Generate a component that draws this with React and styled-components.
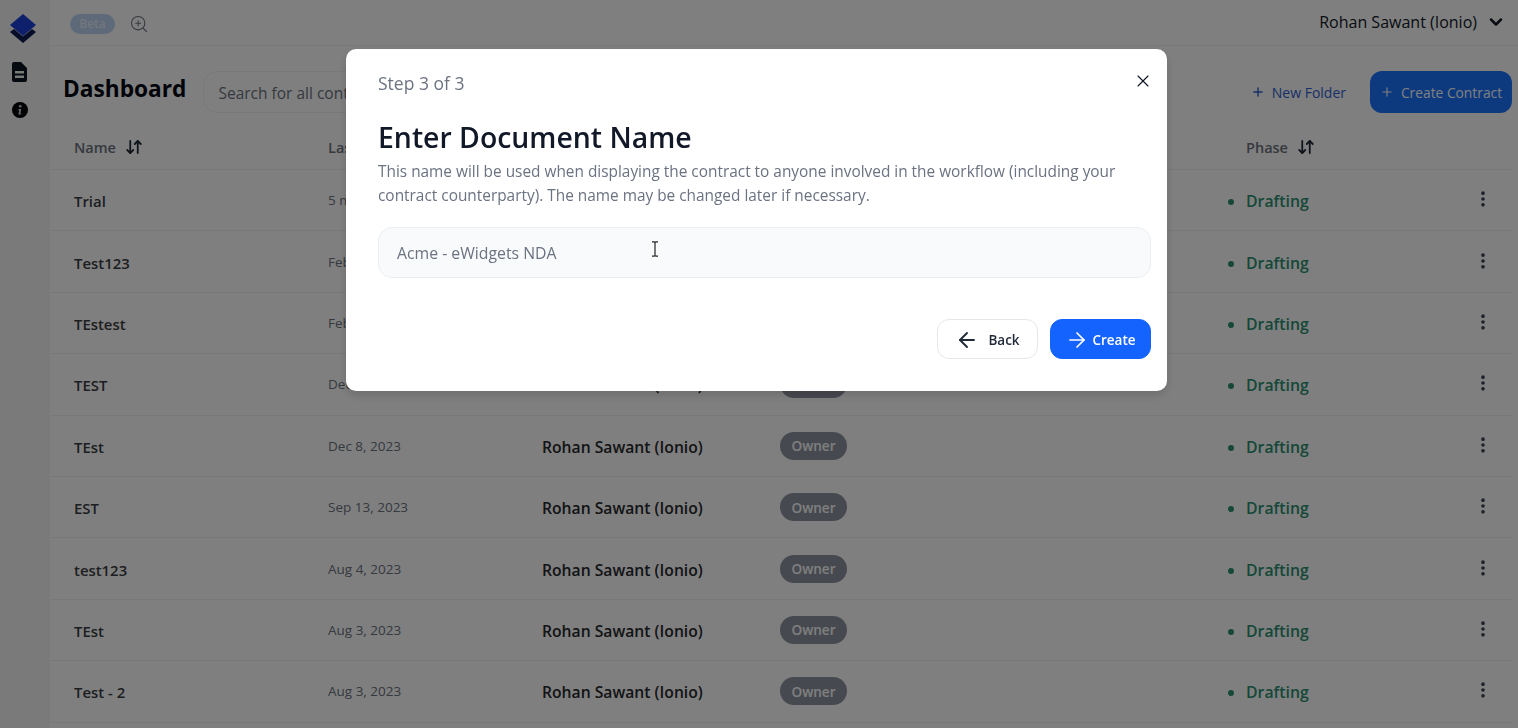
import React from "react";
import styled, { createGlobalStyle } from "styled-components";
import { ArrowDownUp, ArrowLeft, ArrowRight, ChevronDown, EllipsisVertical, Plus, X, ZoomIn } from "lucide-react";

const GlobalStyle = createGlobalStyle`
    * {
        box-sizing: border-box;
    }
    html, body {
        margin: 0;
        height: 100%;
        overflow: hidden;
        background: #ffffff;
        font-family: "Open Sans", "Noto Sans", sans-serif;
        color: #111827;
    }
`;

const Page = styled.div`
    display: flex;
    width: 1518px;
    height: 728px;
    overflow: hidden;
`;

const Sidebar = styled.aside`
    width: 50px;
    flex-shrink: 0;
    background: #f4f4f4;
    display: flex;
    flex-direction: column;
    align-items: center;
    padding: 14px 11px 0 0;
    color: #111827;
`;

const LogoMark = styled.svg`
    margin-left: 7px;
`;

const SideIcon = styled.svg`
    margin-top: ${(p) => p.$top}px;
`;

const Main = styled.main`
    flex: 1;
    min-width: 0;
`;

const TopBar = styled.header`
    height: 46px;
    display: flex;
    align-items: center;
    padding: 2px 12px 0 20px;
    border-bottom: 1px solid #f0f0f0;
`;

const BetaPill = styled.span`
    width: 45px;
    height: 20px;
    border-radius: 10px;
    background: #bcd3f2;
    color: #e6eefa;
    font-size: 12px;
    font-weight: 600;
    display: flex;
    align-items: center;
    justify-content: center;
`;

const ZoomButton = styled.span`
    display: flex;
    margin-left: 14px;
    color: #6b7280;
`;

const UserName = styled.div`
    margin-left: auto;
    margin-bottom: 4px;
    display: flex;
    align-items: center;
    gap: 9px;
    font-size: 16px;
    font-weight: 500;
    color: #111827;
`;

const TitleRow = styled.div`
    display: flex;
    align-items: center;
    height: 64px;
    margin-top: 14px;
    padding: 0 6px 0 13px;
`;

const Title = styled.h1`
    margin: 0 17px 8px 0;
    font-size: 22.7px;
    font-weight: 700;
    color: #030712;
`;

const SearchBox = styled.div`
    width: 420px;
    height: 42px;
    padding: 1px 14px 0;
    border: 1px solid #f0f0f0;
    border-radius: 14px;
    display: flex;
    align-items: center;
    font-size: 15.5px;
    color: #6b7280;
    white-space: nowrap;
`;

const NewFolder = styled.div`
    margin-left: auto;
    margin-right: 24px;
    display: flex;
    align-items: center;
    gap: 7px;
    font-size: 14px;
    font-weight: 500;
    color: #2f5fd0;
`;

const CreateContract = styled.div`
    width: 142px;
    height: 42px;
    border-radius: 12px;
    background: #1a74ff;
    color: #ffffff;
    font-size: 13.8px;
    font-weight: 500;
    display: flex;
    align-items: center;
    justify-content: center;
    gap: 7px;
`;

const Row = styled.div`
    display: grid;
    grid-template-columns: 254px 214px 238px 466px 1fr 26px;
    align-items: center;
    height: ${(p) => (p.$head ? 46 : 61.4)}px;
    margin-right: 6px;
    padding: 0 16px 0 24px;
    border-bottom: 1px solid #f0f0f0;
`;

const HeadCell = styled.div`
    display: flex;
    align-items: center;
    gap: 9px;
    padding-top: 2px;
    font-size: 14.5px;
    font-weight: 560;
    color: #6b7280;
    svg {
        color: #1f2937;
        margin-top: -2px;
    }
`;

const DocName = styled.div`
    padding-top: 2px;
    font-size: 14.9px;
    font-weight: 560;
    color: #3a3d42;
`;

const DateCell = styled.div`
    font-size: 13.5px;
    color: #6b7280;
`;

const OwnerName = styled.div`
    padding-top: 2px;
    font-size: 15.7px;
    font-weight: 560;
    color: #26282c;
`;

const RolePill = styled.span`
    width: 67px;
    height: 28px;
    border-radius: 14px;
    background: #8f93a0;
    color: #ffffff;
    font-size: 13.6px;
    font-weight: 560;
    display: flex;
    align-items: center;
    justify-content: center;
`;

const Phase = styled.div`
    position: relative;
    padding-top: 2px;
    font-size: 15.8px;
    font-weight: 560;
    color: #2a9070;
    &::before {
        content: "";
        position: absolute;
        left: -18px;
        top: 11px;
        width: 6px;
        height: 6px;
        border-radius: 50%;
        background: #2a9070;
    }
`;

const Kebab = styled.div`
    display: flex;
    justify-content: center;
    margin-top: -2px;
    color: #374151;
`;

const Backdrop = styled.div`
    position: fixed;
    inset: 0;
    background: rgba(0, 0, 0, 0.5);
`;

const Modal = styled.section`
    position: fixed;
    left: 346px;
    top: 49px;
    width: 821px;
    height: 342px;
    padding: 22px 16px 0 32px;
    background: #ffffff;
    border-radius: 10px;
    box-shadow: 0 4px 10px rgba(0, 0, 0, 0.15);
`;

const CloseButton = styled.button`
    position: absolute;
    top: 22px;
    right: 14px;
    padding: 0;
    border: 0;
    background: none;
    display: flex;
    color: #111827;
`;

const Step = styled.div`
    font-size: 17.5px;
    line-height: 25px;
    color: #6b7280;
`;

const ModalTitle = styled.h2`
    margin: 21px 0 0;
    font-size: 28.4px;
    line-height: 40px;
    font-weight: 600;
    color: #111827;
`;

const Description = styled.p`
    margin: 3px 0 0;
    font-size: 15.4px;
    line-height: 24px;
    color: #6b7280;
`;

const NameInput = styled.input`
    display: block;
    width: 100%;
    height: 51px;
    margin-top: 19px;
    padding: 1px 18px 0;
    background: #f9fafb;
    border: 1px solid #eceef1;
    border-radius: 14px;
    outline: none;
    font-family: inherit;
    font-size: 15.8px;
    &::placeholder {
        color: #6b7280;
        opacity: 1;
    }
`;

const Actions = styled.div`
    display: flex;
    justify-content: flex-end;
    gap: 12px;
    margin-top: 41px;
`;

const ActionButton = styled.button`
    width: 101px;
    height: 40px;
    padding: 1px 0 0;
    display: flex;
    align-items: center;
    justify-content: center;
    gap: ${(p) => (p.$primary ? 3 : 9)}px;
    border-radius: 12px;
    border: 1px solid ${(p) => (p.$primary ? "#1463ff" : "#e5e7eb")};
    background: ${(p) => (p.$primary ? "#1463ff" : "#ffffff")};
    color: ${(p) => (p.$primary ? "#ffffff" : "#1f2937")};
    font-family: inherit;
    font-size: 13.5px;
    font-weight: 600;
`;

const TextCursor = styled.svg`
    position: fixed;
    left: 651px;
    top: 241px;
`;

const Logo = () => (
    <LogoMark width="28" height="30" viewBox="0 0 28 30">
        <path d="M14 0 L27 11 L14 22 L1 11 Z" fill="#1d3fd6" />
        <path d="M1 18 L5 15 L14 22.5 L23 15 L27 18 L14 29 Z" fill="#0a1a50" />
    </LogoMark>
);

const FileIcon = () => (
    <SideIcon $top={18} width="15" height="20" viewBox="0 0 15 20">
        <path
            fillRule="evenodd"
            d="M2 0h7l6 6v12a2 2 0 0 1-2 2H2a2 2 0 0 1-2-2V2a2 2 0 0 1 2-2zM3 9v2.5h9V9zM3 13.5V16h9v-2.5z"
            fill="#0b1220"
        />
    </SideIcon>
);

const InfoIcon = () => (
    <SideIcon $top={20} width="16" height="16" viewBox="0 0 16 16">
        <circle cx="8" cy="8" r="8" fill="#050608" />
        <circle cx="8.2" cy="4.2" r="1.3" fill="#d0d0d0" />
        <path d="M6.6 7h2.6l-.8 4.4h.9v1.2H6.4l.8-4.4h-.8z" fill="#d0d0d0" />
    </SideIcon>
);

const rows = [
    { name: "Trial", date: "5 months ago" },
    { name: "Test123", date: "Feb 1, 2024" },
    { name: "TEstest", date: "Feb 1, 2024" },
    { name: "TEST", date: "Dec 8, 2023" },
    { name: "TEst", date: "Dec 8, 2023" },
    { name: "EST", date: "Sep 13, 2023" },
    { name: "test123", date: "Aug 4, 2023" },
    { name: "TEst", date: "Aug 3, 2023" },
    { name: "Test - 2", date: "Aug 3, 2023" },
];

function App() {
    return (
        <Page>
            <GlobalStyle />
            <Sidebar>
                <Logo />
                <FileIcon />
                <InfoIcon />
            </Sidebar>
            <Main>
                <TopBar>
                    <BetaPill>Beta</BetaPill>
                    <ZoomButton>
                        <ZoomIn size={20} strokeWidth={1.3} />
                    </ZoomButton>
                    <UserName>
                        Rohan Sawant (Ionio)
                        <ChevronDown size={20} strokeWidth={3} />
                    </UserName>
                </TopBar>
                <TitleRow>
                    <Title>Dashboard</Title>
                    <SearchBox>Search for all contracts</SearchBox>
                    <NewFolder>
                        <Plus size={14} strokeWidth={2.5} />
                        New Folder
                    </NewFolder>
                    <CreateContract>
                        <Plus size={14} strokeWidth={2} />
                        Create Contract
                    </CreateContract>
                </TitleRow>
                <Row $head>
                    <HeadCell>
                        Name <ArrowDownUp size={18} strokeWidth={2.4} />
                    </HeadCell>
                    <HeadCell>Last Modified</HeadCell>
                    <HeadCell>Owner</HeadCell>
                    <HeadCell>Role</HeadCell>
                    <HeadCell>
                        Phase <ArrowDownUp size={18} strokeWidth={2.4} />
                    </HeadCell>
                    <div />
                </Row>
                {rows.map((row, i) => (
                    <Row key={i}>
                        <DocName>{row.name}</DocName>
                        <DateCell>{row.date}</DateCell>
                        <OwnerName>Rohan Sawant (Ionio)</OwnerName>
                        <div>
                            <RolePill>Owner</RolePill>
                        </div>
                        <Phase>Drafting</Phase>
                        <Kebab>
                            <EllipsisVertical size={20} strokeWidth={2.4} />
                        </Kebab>
                    </Row>
                ))}
            </Main>
            <Backdrop />
            <Modal>
                <CloseButton>
                    <X size={20} strokeWidth={1.4} />
                </CloseButton>
                <Step>Step 3 of 3</Step>
                <ModalTitle>Enter Document Name</ModalTitle>
                <Description>
                    This name will be used when displaying the contract to anyone involved in the workflow (including your
                    contract counterparty). The name may be changed later if necessary.
                </Description>
                <NameInput placeholder="Acme - eWidgets NDA" />
                <Actions>
                    <ActionButton>
                        <ArrowLeft size={24} strokeWidth={1.9} />
                        Back
                    </ActionButton>
                    <ActionButton $primary>
                        <ArrowRight size={24} strokeWidth={1.7} />
                        Create
                    </ActionButton>
                </Actions>
            </Modal>
            <TextCursor width="8" height="16" viewBox="0 0 8 16">
                <path d="M1 .8h2.2L4 1.6 4.8.8H7M4 1.6v12.8M1 15.2h2.2l.8-.8.8.8H7" fill="none" stroke="#222" strokeWidth="1.2" />
            </TextCursor>
        </Page>
    );
}

export default App;
